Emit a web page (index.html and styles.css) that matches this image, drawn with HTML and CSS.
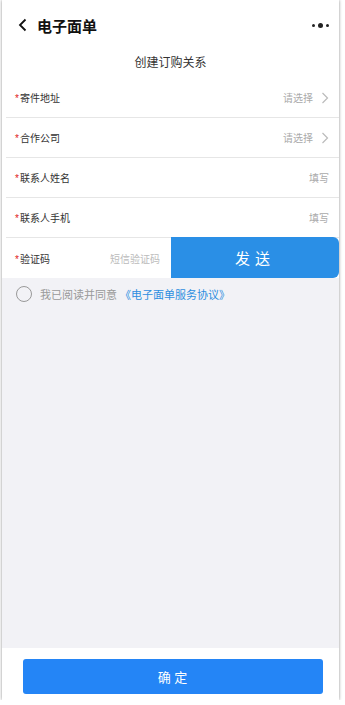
FILE: index.html
```html
<!DOCTYPE html>
<html lang="zh">
<head>
    <meta charset="UTF-8">
    <meta name="viewport" content="width=device-width, initial-scale=1.0">
    <title>电子面单</title>
    <link rel="stylesheet" href="styles.css">
</head>
<body>
    <div class="page">
        <!-- 顶部导航 -->
        <div class="nav">
            <div class="nav-left">
                <svg class="back" width="10" height="14" viewBox="0 0 10 14"><path d="M7.5 1.5 L2 7 L7.5 12.5" fill="none" stroke="#111" stroke-width="1.8"/></svg>
                <span class="nav-title">电子面单</span>
            </div>
            <div class="more"><i></i><i class="big"></i><i></i></div>
        </div>

        <div class="sub-title">创建订购关系</div>

        <div class="form">
            <div class="row">
                <div class="label"><em>*</em>寄件地址</div>
                <div class="value">请选择<svg class="arrow" width="8" height="12" viewBox="0 0 8 12"><path d="M1.5 1 L6.5 6 L1.5 11" fill="none" stroke="#bbb" stroke-width="1.2"/></svg></div>
            </div>
            <div class="row">
                <div class="label"><em>*</em>合作公司</div>
                <div class="value">请选择<svg class="arrow" width="8" height="12" viewBox="0 0 8 12"><path d="M1.5 1 L6.5 6 L1.5 11" fill="none" stroke="#bbb" stroke-width="1.2"/></svg></div>
            </div>
            <div class="row">
                <div class="label"><em>*</em>联系人姓名</div>
                <div class="value">填写</div>
            </div>
            <div class="row">
                <div class="label"><em>*</em>联系人手机</div>
                <div class="value">填写</div>
            </div>
            <div class="row code-row">
                <div class="label"><em>*</em>验证码</div>
                <div class="code-input">短信验证码</div>
                <button class="send-btn">发送</button>
            </div>
        </div>

        <div class="content">
            <div class="agree">
                <span class="circle"></span>
                <span class="agree-text">我已阅读并同意</span>
                <span class="agree-link">《电子面单服务协议》</span>
            </div>
        </div>

        <div class="footer">
            <button class="ok-btn">确 定</button>
        </div>
    </div>
</body>
</html>
```

FILE: styles.css
```css
body {
    margin: 0;
    padding: 0;
    background: #fff;
    font-family: "Liberation Sans", "Noto Sans CJK SC", sans-serif;
    color: #333;
}
.page {
    width: 337px;
    height: 700px;
    margin-left: 2px;
    background: #fff;
    box-shadow: 0 0 3px rgba(0,0,0,0.45);
    display: flex;
    flex-direction: column;
    overflow: hidden;
}
.nav {
    height: 50px;
    display: flex;
    align-items: center;
    justify-content: space-between;
    padding: 0 10px 0 16px;
}
.nav-left {
    display: flex;
    align-items: center;
}
.back {
    margin-right: 9px;
}
.nav-title {
    font-size: 15px;
    font-weight: bold;
    color: #111;
}
.more {
    display: flex;
    align-items: center;
    gap: 3px;
}
.more i {
    display: block;
    width: 3px;
    height: 3px;
    border-radius: 50%;
    background: #222;
}
.more i.big {
    width: 5px;
    height: 5px;
}
.sub-title {
    text-align: center;
    font-size: 12px;
    color: #333;
    height: 28px;
    line-height: 26px;
}
.form {
    padding-left: 4px;
}
.row {
    height: 39px;
    border-bottom: 1px solid #e6e6e6;
    display: flex;
    align-items: center;
    justify-content: space-between;
    padding: 0 10px 0 9px;
}
.label {
    font-size: 10px;
    color: #333;
}
.label em {
    color: #e02020;
    font-style: normal;
    margin-right: 1px;
}
.value {
    font-size: 10px;
    color: #aaa;
    display: flex;
    align-items: center;
}
.arrow {
    margin-left: 8px;
}
.code-row {
    height: 40px;
    padding-right: 0;
    border-bottom: none;
}
.code-input {
    font-size: 10px;
    color: #bbb;
    margin-left: 60px;
    flex: 1;
}
.send-btn {
    width: 168px;
    height: 41px;
    margin-top: -1px;
    border: none;
    border-radius: 0 6px 6px 0;
    background: #2a8fe6;
    color: #fff;
    font-size: 15px;
    letter-spacing: 5px;
    font-family: inherit;
}
.content {
    flex: 1;
    background: #f2f2f6;
}
.agree {
    display: flex;
    align-items: center;
    padding: 8px 0 0 14px;
}
.circle {
    width: 14px;
    height: 14px;
    border: 1px solid #999;
    border-radius: 50%;
    margin-right: 8px;
}
.agree-text {
    font-size: 11px;
    color: #999;
}
.agree-link {
    font-size: 11px;
    color: #2d8ee0;
    margin-left: 3px;
}
.footer {
    height: 48px;
    display: flex;
    justify-content: center;
    align-items: center;
    padding: 4px 0 0 4px;
}
.ok-btn {
    width: 300px;
    height: 35px;
    border: none;
    border-radius: 3px;
    background: #2485f6;
    color: #fff;
    font-size: 13px;
    font-family: inherit;
}
```
